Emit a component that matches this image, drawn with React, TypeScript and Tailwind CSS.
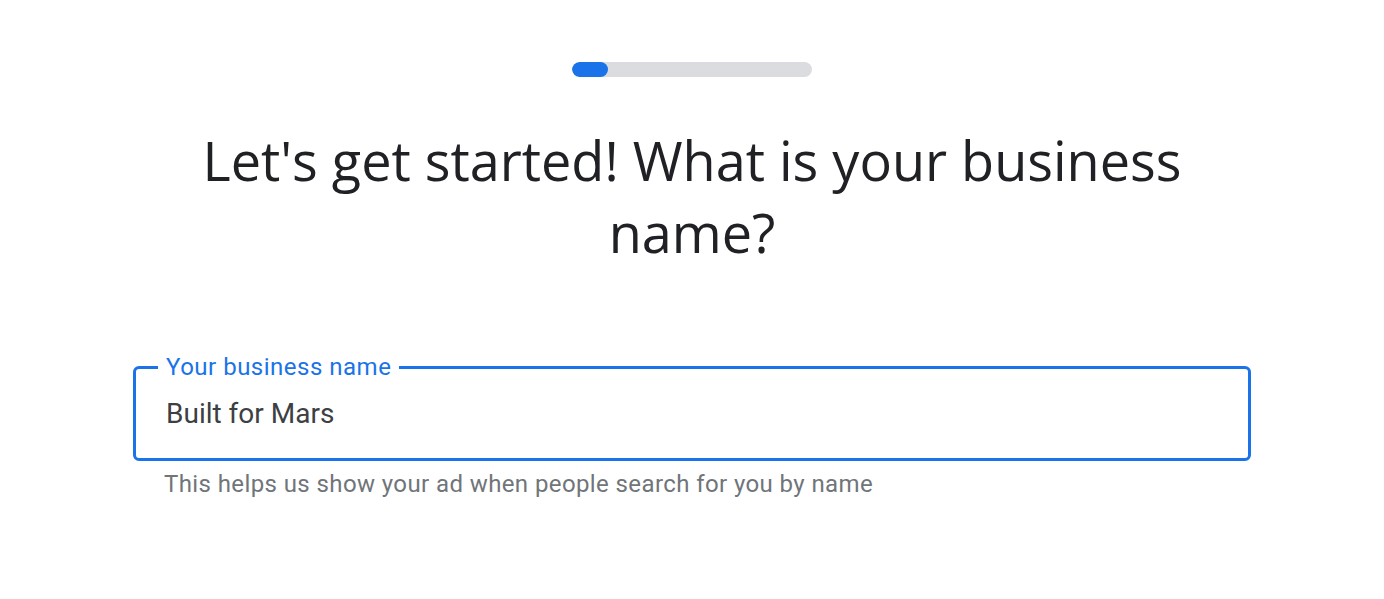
export default function App() {
  return (
    <div className="min-h-screen bg-white flex flex-col items-center font-['Roboto',sans-serif]">
      {/* progress */}
      <div className="mt-[62px] w-[240px] h-[15px] rounded-full bg-[#dadce0] overflow-hidden">
        <div className="w-[36px] h-full rounded-full bg-[#1a73e8]" />
      </div>

      <h1 className="mt-[47px] w-[1040px] text-center text-[54px] leading-[72px] text-[#202124] font-['Open_Sans',sans-serif]">
        Let's get started! What is your business name?
      </h1>

      <div className="mt-[98px] w-[1118px]">
        <div className="relative h-[95px] rounded-[6px] border-[3px] border-[#1a73e8] flex items-center pl-[30px]">
          <span className="absolute left-[22px] -top-[17px] bg-white px-[8px] text-[24px] leading-[30px] text-[#1a73e8] tracking-[0.5px]">
            Your business name
          </span>
          <span className="text-[28px] text-[#3c4043]">Built for Mars</span>
        </div>
        <p className="mt-[8px] pl-[31px] text-[24px] leading-[30px] text-[#70757a] tracking-[0.4px]">
          This helps us show your ad when people search for you by name
        </p>
      </div>
    </div>
  );
}
